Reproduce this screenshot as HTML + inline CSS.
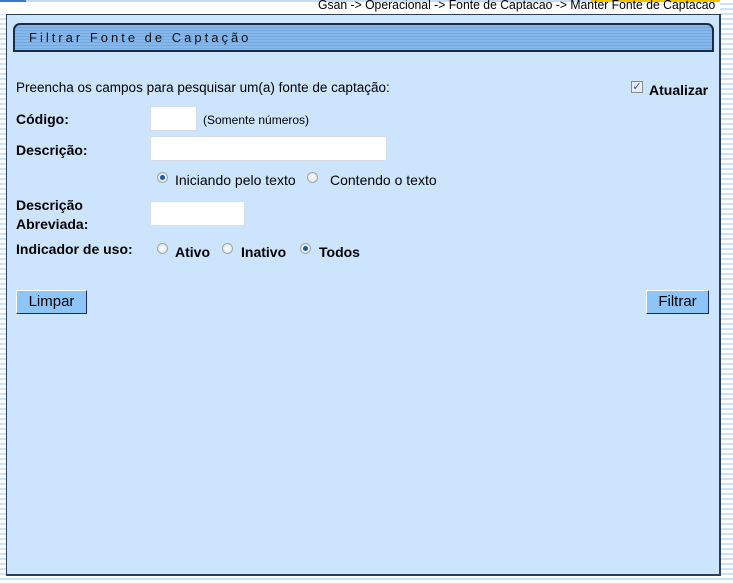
<!DOCTYPE html>
<html><head><meta charset="utf-8"><style>
*{margin:0;padding:0;box-sizing:border-box}
body{width:733px;height:584px;overflow:hidden;position:relative;font-family:"Liberation Sans",Arial,sans-serif;font-size:13px;color:#000;
background:repeating-linear-gradient(to bottom,#fff 0,#fff 3px,#cfe3f6 3px,#cfe3f6 5px);}
.a{position:absolute;white-space:nowrap}
.b{font-weight:bold}
.inp{position:absolute;background:#fff;border:1px solid #d6dde4;border-radius:2px}
.rad{position:absolute;width:11px;height:11px;border-radius:50%;border:1px solid #9aa;background:radial-gradient(circle,#fff,#dcdcdc)}
.rad.on::after{content:"";position:absolute;left:2px;top:2px;width:5px;height:5px;border-radius:50%;background:#1c5a9a}
.btn{position:absolute;height:24px;background:#8ec5f8;border:1px solid #fff;border-right-color:#1a2a60;border-bottom-color:#1a2a60;font-size:15px;text-align:center;line-height:21px}
</style></head><body>
<div class="a" style="left:0;top:0;width:26px;height:3px;background:#3c78c8"></div>
<div class="a" style="left:26px;top:0;width:565px;height:2px;background:#c8dcf0"></div>
<div class="a" style="left:591px;top:0;width:129px;height:4px;background:#f5c400"></div>
<div class="a" style="left:0;top:2px;width:720px;height:12px;background:#fff"></div>
<div class="a" style="left:318px;top:-2px;font-size:12.5px;transform:scaleX(0.975);transform-origin:left">Gsan -&gt; Operacional -&gt; Fonte de Captacao -&gt; Manter Fonte de Captacao</div>
<div class="a" style="left:6px;top:14px;width:715px;height:562px;background:#cce5fc;border:1px solid #2c3e58;border-width:1px 2px 2px 1px"></div>
<div class="a" style="left:13px;top:23px;width:701px;height:29px;border:2px solid #1e2a40;border-radius:7px 7px 0 0;background:repeating-linear-gradient(to bottom,#86b8ec 0,#86b8ec 2px,#74a8e2 2px,#74a8e2 3px)"></div>
<div class="a" style="left:29px;top:30px;font-size:13px;letter-spacing:3px;color:#111">Filtrar Fonte de Captação</div>
<div class="a" style="left:16px;top:80px;font-size:13.5px">Preencha os campos para pesquisar um(a) fonte de captação:</div>
<div class="a" style="left:631px;top:81px;width:12px;height:12px;border:1px solid #8a8a8a;background:#e8eef4;color:#3050a0;font-size:11px;line-height:10px;text-align:center">✓</div>
<div class="a b" style="left:649px;top:82px;font-size:14px">Atualizar</div>
<div class="a b" style="left:16px;top:111px;font-size:14px">Código:</div>
<div class="inp" style="left:150px;top:106px;width:47px;height:25px"></div>
<div class="a" style="left:203px;top:113px;font-size:12px">(Somente números)</div>
<div class="a b" style="left:16px;top:142px;font-size:14px">Descrição:</div>
<div class="inp" style="left:150px;top:136px;width:237px;height:25px"></div>
<div class="rad on" style="left:157px;top:172px"></div>
<div class="a" style="left:175px;top:172px;font-size:14px">Iniciando pelo texto</div>
<div class="rad" style="left:307px;top:172px"></div>
<div class="a" style="left:330px;top:172px;font-size:14px">Contendo o texto</div>
<div class="a b" style="left:16px;top:196px;font-size:14px;line-height:19px">Descrição<br>Abreviada:</div>
<div class="inp" style="left:150px;top:201px;width:95px;height:25px"></div>
<div class="a b" style="left:16px;top:241px;font-size:14px">Indicador de uso:</div>
<div class="rad" style="left:157px;top:243px"></div>
<div class="a b" style="left:175px;top:244px;font-size:14px">Ativo</div>
<div class="rad" style="left:222px;top:243px"></div>
<div class="a b" style="left:241px;top:244px;font-size:14px">Inativo</div>
<div class="rad on" style="left:300px;top:243px"></div>
<div class="a b" style="left:319px;top:244px;font-size:14px">Todos</div>
<div class="btn" style="left:16px;top:290px;width:71px">Limpar</div>
<div class="btn" style="left:646px;top:290px;width:63px">Filtrar</div>
</body></html>
